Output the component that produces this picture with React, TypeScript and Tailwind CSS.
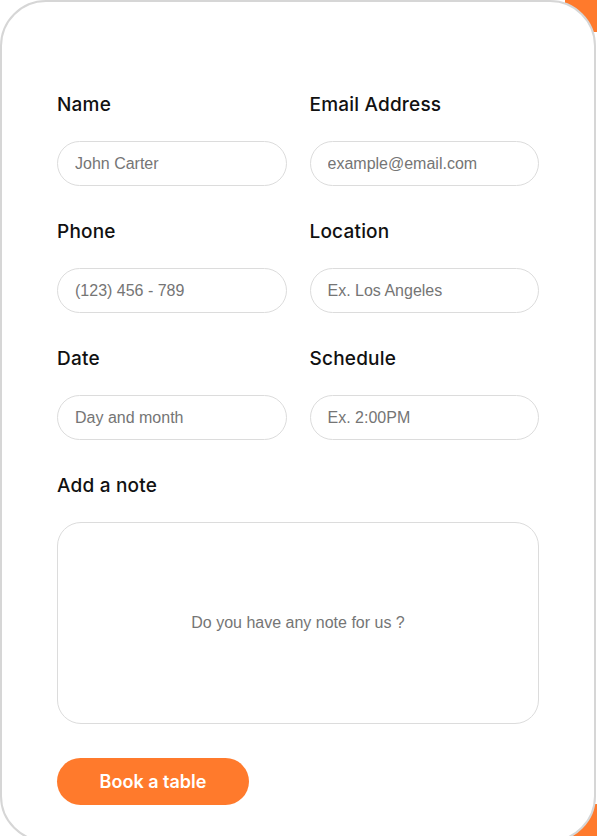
import React from "react";

const labelCls = "text-[19px] leading-6 font-medium tracking-[0.2px] text-[#111] [font-family:Inter,'Noto_Sans',sans-serif]";
const inputCls =
  "h-[45px] w-full rounded-full border border-[#dcdcdc] bg-white px-[17px] text-[16px] text-[#333] outline-none placeholder:text-[#757575] [font-family:'Liberation_Sans',Arial,sans-serif]";

function Field({ label, placeholder }: { label: string; placeholder: string }) {
  return (
    <div className="flex flex-col gap-6">
      <label className={labelCls}>{label}</label>
      <input className={inputCls} placeholder={placeholder} />
    </div>
  );
}

export default function App() {
  return (
    <div className="relative h-[836px] w-[597px] overflow-hidden bg-white">
      <div className="absolute right-0 top-0 h-8 w-8 bg-[#ff7a2c]" />
      <div className="absolute bottom-0 right-0 h-8 w-8 bg-[#ff7a2c]" />
      <div className="relative mr-[1px] h-[842px] rounded-[46px] border-2 border-[#d6d6d6] bg-white pl-[55px] pr-[55px] pt-[91px]">
        <div className="grid grid-cols-2 gap-x-[23px] gap-y-[34px]">
          <Field label="Name" placeholder="John Carter" />
          <Field label="Email Address" placeholder="example@email.com" />
          <Field label="Phone" placeholder="(123) 456 - 789" />
          <Field label="Location" placeholder="Ex. Los Angeles" />
          <Field label="Date" placeholder="Day and month" />
          <Field label="Schedule" placeholder="Ex. 2:00PM" />
          <div className="col-span-2 flex flex-col gap-6">
            <label className={labelCls}>Add a note</label>
            <textarea
              className="h-[202px] w-full resize-none rounded-[24px] border border-[#dcdcdc] bg-white px-4 pt-[90px] text-center text-[16px] leading-5 text-[#333] outline-none placeholder:text-[#757575] [font-family:'Liberation_Sans',Arial,sans-serif]"
              placeholder="Do you have any note for us ?"
            />
          </div>
        </div>
        <button className="mt-[34px] flex h-[47px] w-[192px] items-center justify-center rounded-full bg-[#ff7a2c] text-[18px] font-semibold text-white [font-family:Inter,'Noto_Sans',sans-serif]">
          Book a table
        </button>
      </div>
    </div>
  );
}
